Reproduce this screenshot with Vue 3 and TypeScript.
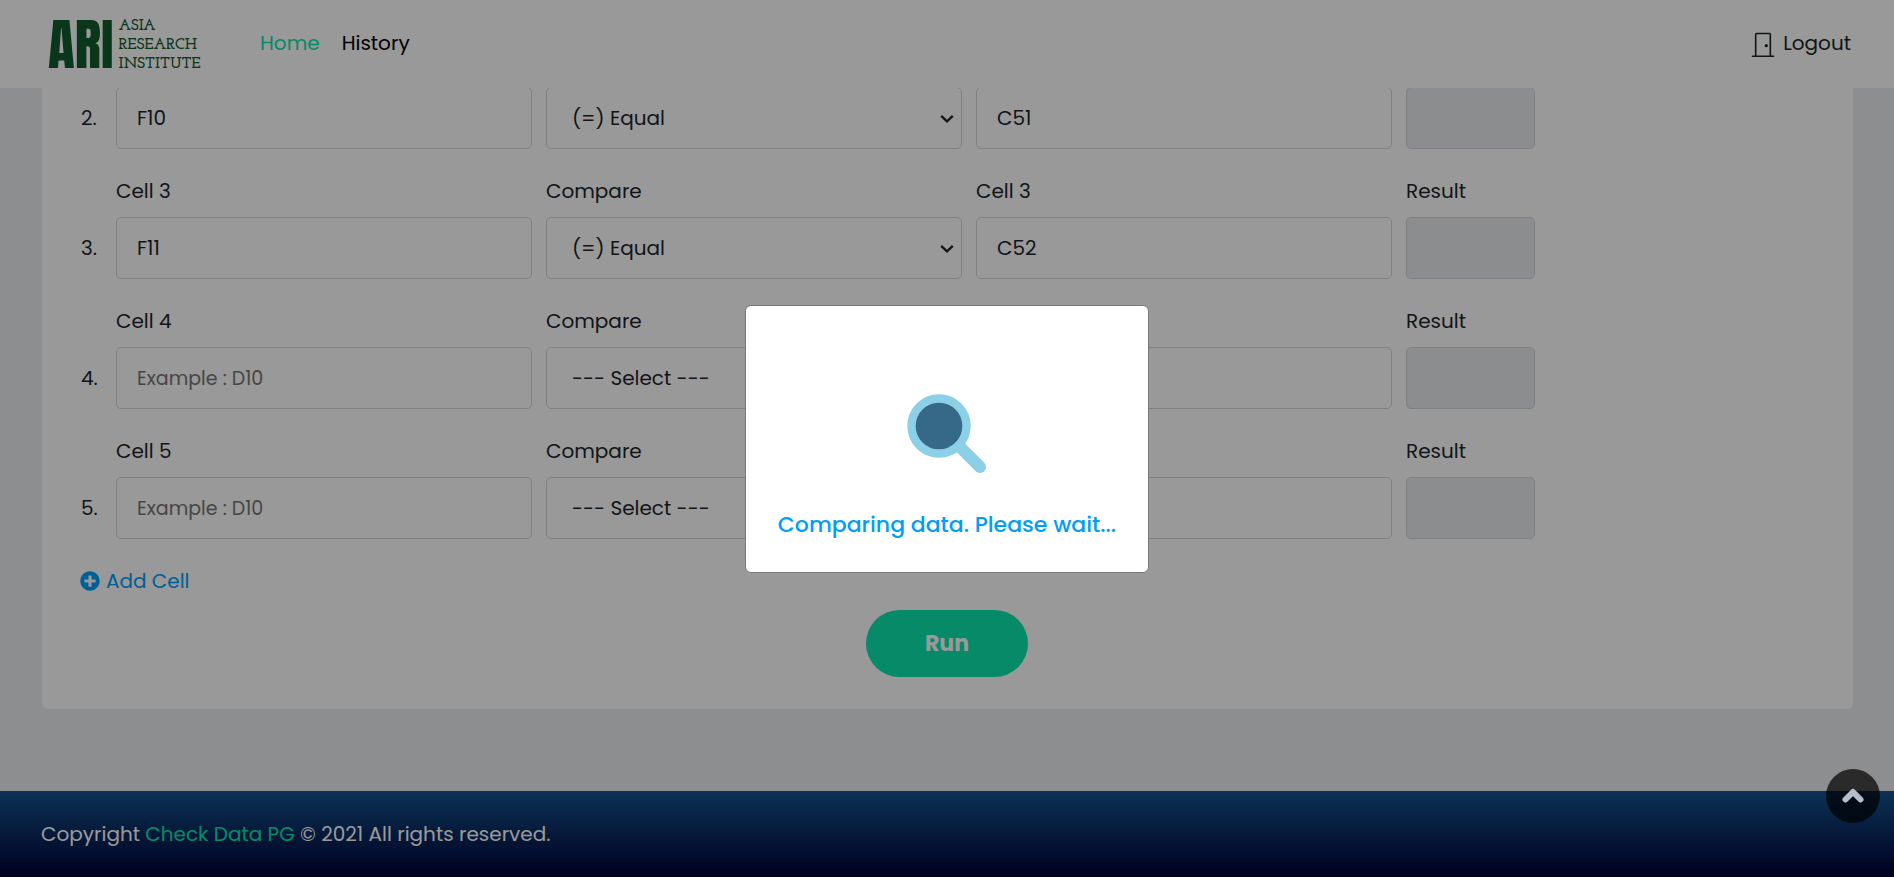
<script setup lang="ts">
import { ref } from 'vue'

interface CellRow {
  no: number
  first: string
  compare: string
  second: string
  labelled: boolean
}

const rows = ref<CellRow[]>([
  { no: 2, first: 'F10', compare: 'eq', second: 'C51', labelled: false },
  { no: 3, first: 'F11', compare: 'eq', second: 'C52', labelled: true },
  { no: 4, first: '', compare: '', second: '', labelled: true },
  { no: 5, first: '', compare: '', second: '', labelled: true },
])

function addCell() {
  rows.value.push({ no: rows.value.length + 2, first: '', compare: '', second: '', labelled: true })
}

function toTop() {
  window.scrollTo({ top: 0, behavior: 'smooth' })
}
</script>

<template>
  <div class="page">
    <header class="header">
      <a href="#" class="logo" aria-label="Asia Research Institute">
        <span class="logo-mark">ARI</span>
        <span class="logo-name">
          <span>ASIA</span>
          <span>RESEARCH</span>
          <span>INSTITUTE</span>
        </span>
      </a>
      <nav class="nav">
        <a href="#" class="active">Home</a>
        <a href="#">History</a>
      </nav>
      <a href="#" class="logout">
        <svg width="26" height="26" viewBox="0 0 16 16" fill="currentColor">
          <path d="M3 2a1 1 0 0 1 1-1h8a1 1 0 0 1 1 1v13h1.500a.5.5 0 0 1 0 1h-13a.5.5 0 0 1 0-1H3V2zm1 13h8V2H4v13z" />
          <path d="M9 9a1 1 0 1 0 2 0 1 1 0 0 0-2 0z" />
        </svg>
        <span class="logout-text">Logout</span>
      </a>
    </header>

    <main class="main">
      <section class="card">
        <div v-for="row in rows" :key="row.no" class="row">
          <span class="number">{{ row.no }}.</span>
          <div class="fields">
            <div class="field wide">
              <label v-if="row.labelled" :for="`first-${row.no}`">Cell {{ row.no }}</label>
              <input :id="`first-${row.no}`" v-model="row.first" type="text" class="control" placeholder="Example : D10" :aria-label="`Cell ${row.no}`" />
            </div>
            <div class="field wide">
              <label v-if="row.labelled" :for="`compare-${row.no}`">Compare</label>
              <div class="select">
                <select :id="`compare-${row.no}`" v-model="row.compare" class="control" aria-label="Compare">
                  <option value="">--- Select ---</option>
                  <option value="eq">(=) Equal</option>
                </select>
                <svg width="14" height="10" viewBox="0 0 14 10" fill="none" stroke="currentColor" stroke-width="2.300">
                  <path d="M1.200 1.800 7 7.400l5.800-5.600" />
                </svg>
              </div>
            </div>
            <div class="field wide">
              <label v-if="row.labelled" :for="`second-${row.no}`">Cell {{ row.no }}</label>
              <input :id="`second-${row.no}`" v-model="row.second" type="text" class="control" :aria-label="`Second cell ${row.no}`" />
            </div>
            <div class="field">
              <label v-if="row.labelled" :for="`result-${row.no}`">Result</label>
              <input :id="`result-${row.no}`" type="text" class="control" disabled aria-label="Result" />
            </div>
          </div>
        </div>
        <button type="button" class="add" @click="addCell">
          <svg width="20" height="20" viewBox="0 0 512 512" fill="currentColor">
            <path d="M256 8C119 8 8 119 8 256s111 248 248 248 248-111 248-248S393 8 256 8zm144 276c0 6.600-5.400 12-12 12h-92v92c0 6.600-5.400 12-12 12h-56c-6.600 0-12-5.400-12-12v-92h-92c-6.600 0-12-5.400-12-12v-56c0-6.600 5.400-12 12-12h92v-92c0-6.600 5.400-12 12-12h56c6.600 0 12 5.400 12 12v92h92c6.600 0 12 5.400 12 12v56z" />
          </svg>
          <span>Add Cell</span>
        </button>
        <button type="button" class="run">Run</button>
      </section>
    </main>

    <footer class="footer">
      <p>Copyright <a href="#">Check Data PG</a> © 2021 All rights reserved.</p>
    </footer>
  </div>

  <div class="overlay">
    <div class="dialog" role="dialog" aria-modal="true" aria-labelledby="dialog-text">
      <svg width="80" height="80" viewBox="0 0 80 80">
        <path d="M50 50 73 73" stroke="#8bd0e6" stroke-width="12" stroke-linecap="round" />
        <circle cx="32" cy="32" r="27.500" fill="#366887" stroke="#8bd0e6" stroke-width="8.400" />
      </svg>
      <p id="dialog-text">Comparing data. Please wait...</p>
    </div>
  </div>

  <button type="button" class="to-top" aria-label="Back to top" @click="toTop">
    <svg width="24" height="18" viewBox="0 0 24 18" fill="none" stroke="#b4bfcb" stroke-width="6" stroke-linecap="round" stroke-linejoin="round">
      <path d="M4.500 12.500 12 5l7.500 7.500" />
    </svg>
  </button>
</template>

<style>
body {
  margin: 0;
  background: #ecedf0;
}
</style>

<style scoped>
.page,
.overlay,
button,
input,
select {
  font-family: Poppins, Inter, "Open Sans", sans-serif;
  font-size: 20px;
  line-height: 30px;
  font-weight: 400;
  color: #212529;
}
.page {
  min-height: 100vh;
  display: flex;
  flex-direction: column;
}
a {
  color: inherit;
  text-decoration: none;
}
button {
  border: 0;
  cursor: pointer;
}
svg {
  display: block;
}
.header {
  position: sticky;
  top: 0;
  z-index: 2;
  display: flex;
  align-items: center;
  height: 88px;
  padding: 0 43px 0 48px;
  background: #fff;
}
.logo {
  display: flex;
  align-items: center;
  gap: 5px;
  width: 154px;
  padding-top: 2px;
  color: #125c30;
}
.logo-mark {
  font: 400 55px/60px Anton, "Bebas Neue", Oswald, "Liberation Sans Narrow", sans-serif;
}
.logo-name {
  display: flex;
  flex-direction: column;
  font: 700 16px/19px "Josefin Slab", "DejaVu Serif Condensed", "DejaVu Serif", serif;
}
.nav {
  display: flex;
  gap: 22px;
  margin-left: 58px;
  padding-bottom: 2px;
  color: #000;
}
.nav .active {
  color: #0ae6ad;
}
.logout {
  display: flex;
  align-items: center;
  gap: 7px;
  margin-left: auto;
}
.logout-text {
  padding-bottom: 2px;
}
.main {
  flex: 1;
  margin-top: -1px;
  padding: 0 41px 82px 42px;
}
.card {
  display: flex;
  flex-direction: column;
  padding: 0 31px 32px 30px;
  background: #fff;
  border-radius: 0 0 5px 5px;
}
.row {
  display: flex;
  align-items: flex-end;
  margin-bottom: 27px;
}
.number {
  width: 35px;
  padding-left: 9px;
  line-height: 62px;
}
.fields {
  flex: 1;
  display: grid;
  grid-template-columns: repeat(12, minmax(0, 1fr));
  gap: 14px;
}
.field {
  display: flex;
  flex-direction: column;
  gap: 11px;
}
.wide {
  grid-column: span 3;
}
.control {
  box-sizing: border-box;
  width: 100%;
  height: 62px;
  padding: 0 20px;
  border: 1px solid #d4d6da;
  border-radius: 5px;
  background: #fff;
  appearance: none;
}
.control::placeholder {
  color: #757575;
  font-size: 19px;
  opacity: 1;
}
.control:disabled {
  background: #e9ecef;
}
.select {
  position: relative;
}
.select .control {
  padding: 0 25px;
}
.select svg {
  position: absolute;
  right: 8px;
  top: 27px;
  pointer-events: none;
}
.add {
  display: flex;
  align-items: center;
  align-self: flex-start;
  gap: 6px;
  margin-bottom: 14px;
  padding: 0 8px;
  background: none;
  color: #009ef7;
}
.run {
  align-self: center;
  width: 162px;
  height: 67px;
  border-radius: 34px;
  background: #0ae6ad;
  color: #fff;
  font-size: 22px;
  font-weight: 700;
}
.footer {
  padding: 28px 41px;
  background: linear-gradient(#15548e, #000035);
  color: #fff;
}
.footer p {
  margin: 0;
}
.footer a {
  color: #0ae6ad;
}
.overlay {
  position: fixed;
  inset: 0;
  z-index: 5;
  display: flex;
  align-items: center;
  justify-content: center;
  background: rgba(0, 0, 0, 0.4);
}
.dialog {
  display: flex;
  flex-direction: column;
  align-items: center;
  gap: 36px;
  padding: 88px 32px 32px;
  border: 1px solid #777;
  border-radius: 6px;
  background: #fff;
}
.dialog p {
  margin: 0;
  font-size: 22px;
  font-weight: 500;
  color: #009ef7;
}
.to-top {
  position: fixed;
  right: 14px;
  bottom: 54px;
  z-index: 6;
  display: flex;
  align-items: center;
  justify-content: center;
  width: 54px;
  height: 54px;
  padding: 0;
  border-radius: 50%;
  background: rgba(0, 0, 0, 0.7);
}
</style>
